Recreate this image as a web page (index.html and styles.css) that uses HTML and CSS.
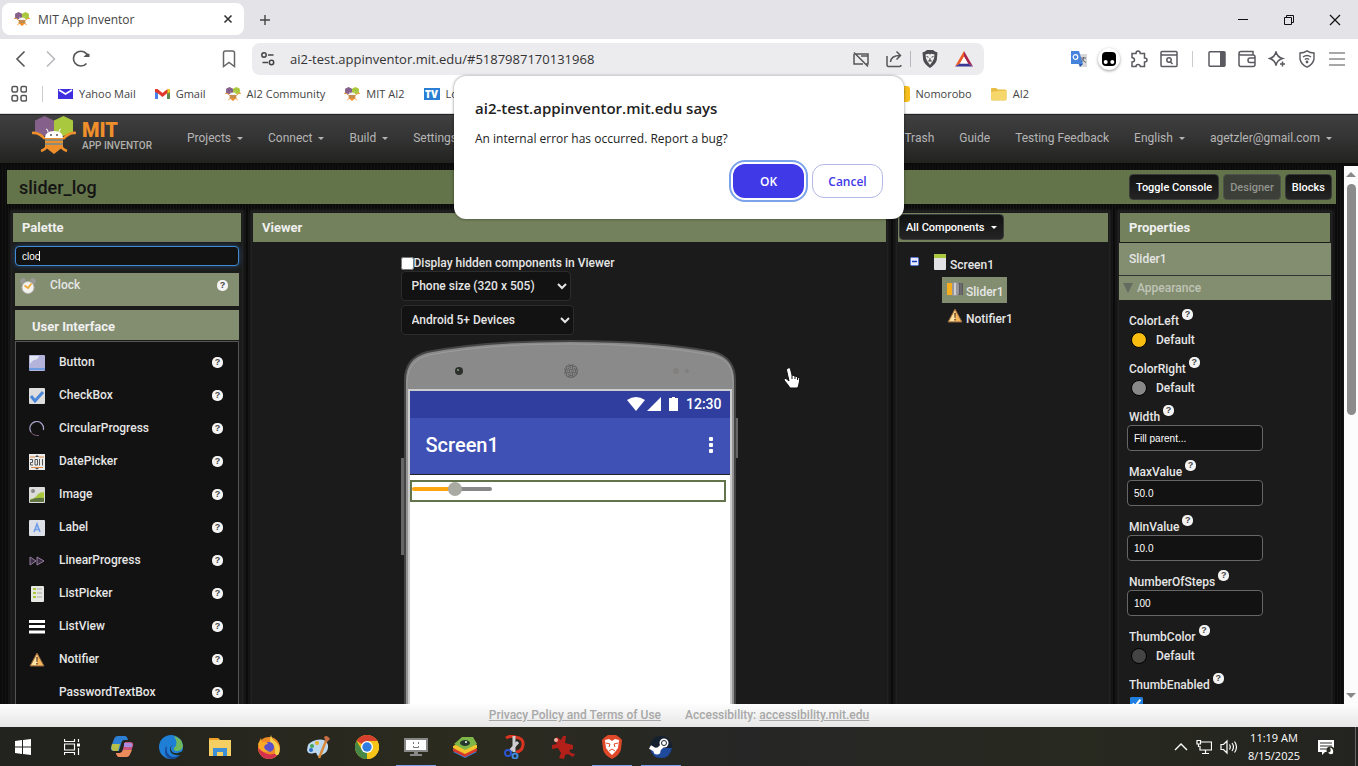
FILE: index.html
```html
<!DOCTYPE html>
<html lang="en">
<head>
    <meta charset="UTF-8">
    <meta name="viewport" content="width=device-width, initial-scale=1.0">
    <title>MIT App Inventor</title>
    <link rel="stylesheet" href="styles.css">
</head>
<body>
    <!-- shared icons -->
    <svg class="defs" width="0" height="0" aria-hidden="true">
        <symbol id="bee" viewBox="0 0 44 38">
            <path d="M3 4.500 12.500 0 22 4.500V16L12.500 20 3 16z" fill="#84608a"/>
            <path d="M22 4.500 31.500 0 41 4.500V16L31.500 20 22 16z" fill="#a9c83e"/>
            <path d="M0 17q7-1 13 6M44 17q-7-1-13 6M9 35q4-1 6-5M35 35q-4-1-6-5" fill="none" stroke="#ee8f2c" stroke-width="2.500"/>
            <path d="M16 16q0-3-2-3M27 16q0-3 2-3" fill="none" stroke="#fff" stroke-width="1"/>
            <path d="M13 22q0-7 9-7t9 7z" fill="#fff"/>
            <path d="M13 22h18v9l-9 7-9-7z" fill="#ee8f2c"/>
            <path d="M13 24h18M13 28h18" stroke="#8d8b7a" stroke-width="2"/>
            <circle cx="19" cy="19" r="1" fill="#555"/><circle cx="25" cy="19" r="1" fill="#555"/>
        </symbol>
        <symbol id="warn" viewBox="0 0 16 16">
            <path d="M8 1 15 14H1z" fill="#f6b65c" stroke="#8d6540" stroke-width="1"/>
            <path d="M8 3v10H2.500z" fill="#fde2a6"/>
            <path d="M7.200 5h1.600l-.3 5h-1zM7.200 11h1.600v1.500H7.200z" fill="#6b4a2c"/>
        </symbol>
    </svg>

    <!-- tab strip -->
    <div class="tabs">
        <div class="tab">
            <svg width="16" height="16"><use href="#bee"/></svg>
            <span>MIT App Inventor</span>
            <button class="icon-btn tab-close" aria-label="Close tab"><svg width="10" height="10" viewBox="0 0 10 10"><path d="M1.500 1.500l7 7M8.500 1.500l-7 7" stroke="#333" stroke-width="1.600"/></svg></button>
        </div>
        <button class="icon-btn new-tab" aria-label="New tab"><svg width="12" height="12" viewBox="0 0 12 12"><path d="M6 1v10M1 6h10" stroke="#444" stroke-width="1.400"/></svg></button>
        <div class="window-buttons">
            <button aria-label="Minimize"><svg width="12" height="12" viewBox="0 0 12 12"><path d="M1 5.500h10" stroke="#111"/></svg></button>
            <button aria-label="Restore"><svg width="12" height="12" viewBox="0 0 12 12" fill="none" stroke="#111"><path d="M1.500 3.500h7v7h-7zM3.500 3.500v-2h7v7h-2"/></svg></button>
            <button aria-label="Close"><svg width="12" height="12" viewBox="0 0 12 12"><path d="M1 1l10 10M11 1L1 11" stroke="#111" stroke-width="1.200"/></svg></button>
        </div>
    </div>

    <!-- address bar -->
    <div class="toolbar">
        <div class="nav-buttons">
            <button class="icon-btn" aria-label="Back"><svg width="18" height="18" viewBox="0 0 18 18" fill="none" stroke="#555" stroke-width="1.600"><path d="M12.500 1.500 5 9l7.500 7.500"/></svg></button>
            <button class="icon-btn" aria-label="Forward"><svg width="18" height="18" viewBox="0 0 18 18" fill="none" stroke="#b9b9bd" stroke-width="1.600"><path d="M5 1.500 12.500 9 5 16.500"/></svg></button>
            <button class="icon-btn" aria-label="Reload"><svg width="18" height="18" viewBox="0 0 18 18" fill="none" stroke="#555" stroke-width="1.600"><path d="M14.500 13.500A7.400 7.400 0 1 1 16 6.500"/><path d="M11.500 7h6V4q-2-1-3 0z" fill="#555" stroke="none"/></svg></button>
            <button class="icon-btn bookmark-btn" aria-label="Bookmark this page"><svg width="18" height="18" viewBox="0 0 18 18" fill="none" stroke="#666" stroke-width="1.500"><path d="M3.500 3q0-2 2-2h7q2 0 2 2v13.500L9 12.500l-5.500 4z"/></svg></button>
        </div>
        <div class="url-bar">
            <svg width="16" height="16" viewBox="0 0 16 16" fill="none" stroke="#444" stroke-width="1.500"><circle cx="4" cy="4" r="2.200"/><path d="M8 4h5.500"/><circle cx="11.500" cy="11.500" r="2.200"/><path d="M2.500 11.500H8"/></svg>
            <input type="text" aria-label="Address" value="ai2-test.appinventor.mit.edu/#5187987170131968">
            <svg width="18" height="18" viewBox="0 0 18 18" fill="none" stroke="#555" stroke-width="1.500"><path d="M4 4h12v10h-2M11 14H2V4M2 2.500 16 16.500M9 6h7"/></svg>
            <svg class="share" width="18" height="18" viewBox="0 0 18 18" fill="none" stroke="#555" stroke-width="1.500"><path d="M2 6v9q0 1.500 1.500 1.500h11q1.500 0 1.500-1.500M5.500 12Q6 5.500 15 5.500M11.500 1.500l4 4-4 4"/></svg>
            <span class="url-divider"></span>
            <svg width="18" height="18" viewBox="0 0 18 18"><path d="M4 1.500 6 0h6l2 1.500 2.500 1-.7 7.500q-1 4-6.800 8-5.800-4-6.800-8L1.500 2.500z" fill="#4b4b50"/><path d="M4.500 4.500l3-.8L9 4.500l1.500-.8 3 .8-.5 4-1.500 3L9 15l-2.500-3.500-1.500-3z" fill="#eee"/><path d="M5.500 6.500l2 .7M12.500 6.500l-2 .7M9 8v2l-1.500 1h3L9 10" stroke="#4b4b50" fill="none"/></svg>
            <svg class="bat" width="20" height="18" viewBox="0 0 20 18"><path d="M10 1 1 16.500l5-3L10 7z" fill="#ee5a26"/><path d="M10 1l9 15.500-5-3L10 7z" fill="#a8264c"/><path d="M1 16.500h18l-5-3H6z" fill="#3b3894"/><path d="M10 6.500l4 7H6z" fill="#fff"/></svg>
        </div>
        <div class="extensions">
            <button class="icon-btn" aria-label="Google Translate"><svg width="18" height="18" viewBox="0 0 18 18"><path d="M6 4h11v13H9z" fill="#d8d8d8"/><path d="M1 1h8l4 13H1z" fill="#4683dc"/><path d="M9 14h4l-3 3z" fill="#2a56b0"/><circle cx="5.500" cy="7" r="2.300" fill="none" stroke="#fff" stroke-width="1.200"/><path d="M11 8h5M13.500 7v1q0 3-2 4M12 9q1 2 4 3.500" stroke="#667" fill="none"/></svg></button>
            <button class="icon-btn" aria-label="Tampermonkey"><svg class="round" width="22" height="22" viewBox="0 0 22 22"><rect x="4" y="4" width="14" height="14" rx="4"/><circle cx="7.700" cy="14" r="2" fill="#fff"/><circle cx="14.300" cy="14" r="2" fill="#fff"/></svg></button>
            <button class="icon-btn" aria-label="Extensions"><svg width="18" height="18" viewBox="0 0 18 18" fill="none" stroke="#5a5a60" stroke-width="1.500"><path d="M2 3.500h4Q6 1 8 1t2.300 2.500h4.200V8Q17 8 17 10t-2.500 2v4.500h-4.200Q10 14.500 8 14.500T6 16.500H2V12q2.500 0 2.500-2T2 7.500z"/></svg></button>
            <button class="icon-btn" aria-label="Search page"><svg width="18" height="18" viewBox="0 0 18 18" fill="none" stroke="#5a5a60" stroke-width="1.500"><rect x="1" y="1.500" width="16" height="15" rx="1"/><path d="M1 5h16M10.500 12l2 2"/><circle cx="9" cy="10" r="2.200"/></svg></button>
            <span class="tool-divider"></span>
            <button class="icon-btn" aria-label="Sidebar"><svg width="18" height="18" viewBox="0 0 18 18"><rect x="1" y="1.800" width="16" height="14.500" rx="1" fill="none" stroke="#5a5a60" stroke-width="1.500"/><path d="M12 2h5v14h-5z" fill="#5a5a60"/></svg></button>
            <button class="icon-btn" aria-label="Wallet"><svg width="18" height="18" viewBox="0 0 18 18" fill="none" stroke="#5a5a60" stroke-width="1.500"><path d="M1 3.500Q1 1.500 3 1.500h12v3M1 3.500Q1 5 3 5h12q2 0 2 2v7.500q0 2-2 2H3q-2 0-2-2zM17 8h-5q-2 0-2 2.200T12 12.500h5"/></svg></button>
            <button class="icon-btn" aria-label="Leo AI"><svg width="18" height="18" viewBox="0 0 18 18" fill="none" stroke="#5a5a60" stroke-width="1.500"><path d="M8 1.500q1 5.500 6.500 7-5.500 1.500-6.500 7-1-5.500-6.500-7Q7 7 8 1.500zM14.500 11.500v5M12 14h5"/></svg></button>
            <button class="icon-btn" aria-label="VPN"><svg width="18" height="18" viewBox="0 0 18 18" fill="none" stroke="#5a5a60" stroke-width="1.400"><path d="M9 .8q3 2 7 2.200v6q-1 5.500-7 8.200Q3 14.500 2 9V3q4-.2 7-2.200zM5 7q4-3 8 0M6.800 9.500q2.200-1.700 4.400 0"/><circle cx="9" cy="12" r=".7"/></svg></button>
            <button class="icon-btn" aria-label="Menu"><svg width="18" height="18" viewBox="0 0 18 18" stroke="#8a8a8e" stroke-width="1.700"><path d="M1 3h16M1 9h16M1 15h16"/></svg></button>
        </div>
    </div>

    <!-- bookmarks -->
    <nav class="bookmarks">
        <button class="icon-btn apps" aria-label="Apps"><svg width="16" height="18" viewBox="0 0 16 18" fill="none" stroke="#555" stroke-width="1.500"><rect x="1" y="1.500" width="5.500" height="5.500" rx="1.500"/><rect x="10" y="1.500" width="5.500" height="5.500" rx="1.500"/><rect x="1" y="10.500" width="5.500" height="5.500" rx="1.500"/><rect x="10" y="10.500" width="5.500" height="5.500" rx="1.500"/></svg></button>
        <span class="tool-divider"></span>
        <a href="#"><svg width="15" height="12" viewBox="0 0 15 12"><path d="M0 1h15v10H0z" fill="#3f2ee0"/><path d="M1 2l6.500 4L14 2" stroke="#fff" stroke-width="1.500" fill="none"/></svg>Yahoo Mail</a>
        <a href="#"><svg width="15" height="12" viewBox="0 0 15 12"><path d="M0 2h3v9H0z" fill="#4a80e8"/><path d="M12 2h3v9h-3z" fill="#5b8a4a"/><path d="M0 1h2.500l5 4 5-4V5l-5 4-5-4L0 4z" fill="#e0392c"/><path d="M12.500 1H15v3l-2.500 2z" fill="#f3c21f"/></svg>Gmail</a>
        <a href="#"><svg width="16" height="16"><use href="#bee"/></svg>AI2 Community</a>
        <a href="#"><svg width="16" height="16"><use href="#bee"/></svg>MIT AI2</a>
        <a href="#" class="long"><span class="tv-badge">TV</span>Local</a>
        <a href="#"><span class="nomo-badge">?</span>Nomorobo</a>
        <a href="#"><svg width="16" height="14" viewBox="0 0 16 14"><path d="M0 2q0-1 1-1h4l2 1.500h7q1.500 0 1.500 1V12q0 1.500-1.500 1.500H1Q0 13.500 0 12z" fill="#e8bd45"/><path d="M0 5l7-1 8.500-.5V12q0 1-1.500 1H1q-1 0-1-1z" fill="#f5d76c"/></svg>AI2</a>
    </nav>

    <!-- App Inventor -->
    <header class="app-header">
        <svg class="logo" width="44" height="38"><use href="#bee"/></svg>
        <div class="brand"><strong>MIT</strong><span>APP INVENTOR</span></div>
        <nav class="menu">
            <a href="#" class="caret">Projects</a>
            <a href="#" class="caret">Connect</a>
            <a href="#" class="caret">Build</a>
            <a href="#" class="caret">Settings</a>
        </nav>
        <nav class="menu menu-right">
            <a href="#">Trash</a>
            <a href="#">Guide</a>
            <a href="#">Testing Feedback</a>
            <a href="#" class="caret">English</a>
            <a href="#" class="caret">agetzler@gmail.com</a>
        </nav>
    </header>

    <div class="app-scroll">
        <main class="app">
            <div class="project-bar">
                <h1>slider_log</h1>
                <button class="btn">Toggle Console</button>
                <button class="btn" disabled>Designer</button>
                <button class="btn">Blocks</button>
            </div>

            <div class="columns">
                <section class="panel palette">
                    <h2>Palette</h2>
                    <input class="search" type="text" aria-label="Search components" value="cloc">
                    <span class="text-caret"></span>
                    <div class="result">
                        <svg width="16" height="18" viewBox="0 0 16 18"><path d="M0 5q0-4 4-4l2 2-4 4zM16 5q0-4-4-4l-2 2 4 4z" fill="#9a9a98"/><circle cx="8" cy="10.500" r="6" fill="#f4f2ee" stroke="#b9b7b2"/><path d="M4.500 8.500 8 11l3.500-4.500" stroke="#efa93a" stroke-width="1.800" fill="none"/></svg>
                        <span>Clock</span>
                        <button class="help">?</button>
                    </div>
                    <h3>User Interface</h3>
                    <ul class="components">
                        <li><svg width="16" height="16" viewBox="0 0 16 16"><rect width="16" height="16" rx="1" fill="#b3b3dc"/><path d="M1 1h9q-1 4-5 4-2 1-4 4z" fill="#dfe6f4"/><path d="M0 13h16v2H0z" fill="#6d9ce0"/></svg><span>Button</span><button class="help">?</button></li>
                        <li><svg width="16" height="16" viewBox="0 0 16 16"><rect width="16" height="16" rx="1" fill="#dedede"/><path d="M2 8l4 5L14 4" stroke="#4a86d8" stroke-width="3" fill="none"/></svg><span>CheckBox</span><button class="help">?</button></li>
                        <li><svg width="16" height="16" viewBox="0 0 16 16" fill="none"><path d="M2 11A6.800 6.800 0 1 1 14.300 9" stroke="#a9a0c8" stroke-width="1.200"/><path d="M2 11q2 4 8 3.500" stroke="#7a5a78"/></svg><span>CircularProgress</span><button class="help">?</button></li>
                        <li><svg width="16" height="16" viewBox="0 0 16 16"><rect width="16" height="16" fill="#ececea"/><path d="M1 3h5M10 3h5M2 13.500h12" stroke="#e08a4a"/><path d="M6 3l2-2 2 2zM6 14l2 1.500 2-1.500z" fill="#444"/><path d="M1 5.500h2.500v3H1.500v2.500H4M6 5.500h2.500V11H6zM10.500 5v6.500M13.500 5v6.500" stroke="#555" fill="none"/></svg><span>DatePicker</span><button class="help">?</button></li>
                        <li><svg width="16" height="16" viewBox="0 0 16 16"><rect width="16" height="16" rx="1" fill="#dcdcda"/><circle cx="4" cy="4" r="2" fill="#888"/><path d="M1 12q5 0 8-5 2-2 6-2v10H1z" fill="#a9c83e"/><path d="M1 13q6-3 14-2v4H1z" fill="#5f7340"/></svg><span>Image</span><button class="help">?</button></li>
                        <li><svg width="16" height="16" viewBox="0 0 16 16"><rect width="16" height="16" rx="1" fill="#dde0e6"/><path d="M5 12l3-8 3 8M6 9.500h4" stroke="#6d9ce8" stroke-width="1.600" fill="none"/></svg><span>Label</span><button class="help">?</button></li>
                        <li><svg width="16" height="16" viewBox="0 0 16 16"><path d="M1 4l6 4-6 4zM8 4l7 4-7 4z" fill="#3a2f42" stroke="#9a7fa4"/></svg><span>LinearProgress</span><button class="help">?</button></li>
                        <li><svg width="16" height="16" viewBox="0 0 16 16"><rect x="2" width="13" height="16" rx="1" fill="#e6e6e2"/><path d="M4 3h3M4 7h3M4 11h3" stroke="#a9c83e" stroke-width="2"/><path d="M8 3h5M8 7h5M8 11h5" stroke="#aaa"/></svg><span>ListPicker</span><button class="help">?</button></li>
                        <li><svg width="16" height="16" viewBox="0 0 16 16"><path d="M0 2.500h16M0 7.500h16M0 13h16" stroke="#fff" stroke-width="3"/></svg><span>ListView</span><button class="help">?</button></li>
                        <li><svg width="16" height="16"><use href="#warn"/></svg><span>Notifier</span><button class="help">?</button></li>
                        <li><i class="no-icon"></i><span>PasswordTextBox</span><button class="help">?</button></li>
                    </ul>
                </section>

                <section class="panel viewer">
                    <h2>Viewer</h2>
                    <div class="viewer-body">
                        <label class="hidden-toggle"><input type="checkbox">Display hidden components in Viewer</label>
                        <select class="size-select" aria-label="Screen size"><option>Phone size (320 x 505)</option></select>
                        <select class="device-select" aria-label="Device theme"><option>Android 5+ Devices</option></select>
                        <div class="phone">
                            <svg class="phone-frame" width="338" height="420" viewBox="0 0 338 420">
                                <path d="M0 118h5v97H0zM333 78h4v40h-4z" fill="#666"/>
                                <path d="M4 420V40Q4 18 26 12 82 1 169 1t144 11q21 6 21 28v380z" fill="#8a8a8a" stroke="#444" stroke-width="2"/>
                                <path d="M6 420V40Q7 20 28 15 86 4 169 4t142 11q21 5 21 25v380" fill="none" stroke="#9c9c9c"/>
                                <circle cx="58" cy="31" r="4" fill="#2c2f2c"/><circle cx="57" cy="30" r="1" fill="#7fa07f"/>
                                <circle cx="170" cy="31" r="7" fill="#656565"/>
                                <path d="M164 28h12M163 31h14M164 34h12M167 25v12M170 24v14M173 25v12" stroke="#999" stroke-dasharray="1 1"/>
                                <circle cx="275" cy="31" r="3" fill="#827f7f"/><circle cx="286" cy="31" r="2" fill="#827f7f"/>
                            </svg>
                            <div class="screen">
                                <div class="status">
                                    <svg width="18" height="14" viewBox="0 0 18 14"><path d="M0 3q9-6 18 0L9 14z" fill="#fff"/></svg>
                                    <svg width="14" height="14" viewBox="0 0 14 14"><path d="M14 0v14H0z" fill="#fff"/></svg>
                                    <svg class="battery" width="9" height="14" viewBox="0 0 9 14"><path d="M0 1h3V0h3v1h3v13H0z" fill="#fff"/></svg>
                                    <span>12:30</span>
                                </div>
                                <div class="title-bar">
                                    <span>Screen1</span>
                                    <svg width="5" height="16" viewBox="0 0 5 16" fill="#fff"><rect width="4" height="4" rx="1"/><rect y="6" width="4" height="4" rx="1"/><rect y="12" width="4" height="4" rx="1"/></svg>
                                </div>
                                <div class="slider-box"><input type="range" aria-label="Slider1" min="10" max="50" value="32"></div>
                            </div>
                        </div>
                    </div>
                </section>

                <section class="panel tree">
                    <div class="panel-head"><button class="btn caret">All Components</button></div>
                    <ul>
                        <li class="root">
                            <svg class="minus" width="9" height="9" viewBox="0 0 9 9"><rect x=".5" y=".5" width="8" height="8" rx="1" fill="#e8ecff" stroke="#5a74d8"/><path d="M2 4.500h5" stroke="#1c38b0" stroke-width="1.500"/></svg>
                            <svg width="12" height="16" viewBox="0 0 12 16"><rect width="12" height="16" rx="1" fill="#e2e2e4"/><path d="M0 1q0-1 1-1h10q1 0 1 1v3H0z" fill="#a9c83e"/></svg>
                            <span>Screen1</span>
                        </li>
                        <li class="child selected">
                            <svg width="16" height="16" viewBox="0 0 16 16"><path d="M0 2h5v12H0z" fill="#f5ad1b"/><path d="M11 2h5v12h-5z" fill="#5c5c60"/><path d="M5 3q0-2 3-2t4 2v10q-1 2-4 2t-3-2z" fill="#98989c"/><path d="M7 2h2v12H7z" fill="#cfcfd2"/><path d="M14 2v12" stroke="#7a7a7c"/></svg>
                            <span>Slider1</span>
                        </li>
                        <li class="child">
                            <svg width="16" height="16"><use href="#warn"/></svg>
                            <span>Notifier1</span>
                        </li>
                    </ul>
                </section>

                <section class="panel properties">
                    <h2>Properties</h2>
                    <div class="target">Slider1</div>
                    <button class="group">Appearance</button>
                    <div class="props">
                        <div class="prop"><span class="name">ColorLeft<button class="help">?</button></span><button class="color"><i class="yellow"></i>Default</button></div>
                        <div class="prop"><span class="name">ColorRight<button class="help">?</button></span><button class="color"><i class="gray"></i>Default</button></div>
                        <div class="prop"><span class="name"><label for="width">Width</label><button class="help">?</button></span><input type="text" id="width" value="Fill parent..."></div>
                        <div class="prop"><span class="name"><label for="max">MaxValue</label><button class="help">?</button></span><input type="text" id="max" value="50.0"></div>
                        <div class="prop"><span class="name"><label for="min">MinValue</label><button class="help">?</button></span><input type="text" id="min" value="10.0"></div>
                        <div class="prop"><span class="name"><label for="steps">NumberOfSteps</label><button class="help">?</button></span><input type="text" id="steps" value="100"></div>
                        <div class="prop"><span class="name">ThumbColor<button class="help">?</button></span><button class="color"><i class="dark"></i>Default</button></div>
                        <div class="prop"><span class="name"><label for="thumb">ThumbEnabled</label><button class="help">?</button></span><input type="checkbox" id="thumb" checked></div>
                    </div>
                </section>
            </div>
        </main>
        <div class="scrollbar">
            <i class="arrow up"></i>
            <i class="thumb"></i>
            <i class="arrow down"></i>
        </div>
    </div>

    <footer class="app-footer">
        <a href="#">Privacy Policy and Terms of Use</a>
        <span>Accessibility: <a href="#">accessibility.mit.edu</a></span>
    </footer>

    <!-- Windows taskbar -->
    <div class="taskbar">
        <button class="start" aria-label="Start"><svg width="16" height="16" viewBox="0 0 16 16" fill="#fff"><path d="M0 2l7-1v6.500H0zM8 1l8-1v7.500H8zM0 8.500h7V15l-7-1zM8 8.500h8V16l-8-1z"/></svg></button>
        <button class="task-view" aria-label="Task View"><svg width="16" height="16" viewBox="0 0 16 16" fill="none" stroke="#fff" stroke-width="1.200"><path d="M.5 0v2.500h10V0M.5 5h10v6H.5zM.5 16v-2.500h10V16M14.500 0v3M14.500 9v7"/><path d="M13 4.500h3v3h-3z" fill="#fff" stroke="none"/></svg></button>
        <button aria-label="Copilot"><svg width="24" height="24" viewBox="0 0 24 24"><path d="M8 1h7q2 0 3 4h-4q-2 0-3 4l-2 7H4q-4 0-3-4L4 4q1-3 4-3z" fill="#2d7fd3"/><path d="M2 9h8l-2 7H4q-4 0-2-7z" fill="#b8bf48"/><path d="M16 22H9q-2 0-3-4h4q2 0 3-4l2-7h5q4 0 3 4l-3 8q-1 3-4 3z" fill="#c7567d"/><path d="M6 18h4q2 0 3-3h9l-2 4q-1 3-4 3H9q-2 0-3-4z" fill="#ec8c5a"/><path d="M14 8h6q3 0 2 4h-8z" fill="#a98ce0"/></svg></button>
        <button aria-label="Edge"><svg width="24" height="24" viewBox="0 0 24 24"><circle cx="12" cy="12" r="12" fill="#1f7fd6"/><path d="M15 1q8 2 9 10-1 5-6 5-4 0-3-3 5-4 0-12z" fill="#6fb85e"/><path d="M8 11q-2 9 6 11 5 0 7-3-2 5-9 5Q5 22 6 15q0-3 2-4z" fill="#184a9c"/><path d="M14 10q-3 2-2 5 2 4 7 3l5-2v3l-3 1q-9 1-10-5 0-4 3-5z" fill="#22281f"/></svg></button>
        <button aria-label="File Explorer"><svg width="22" height="20" viewBox="0 0 22 20"><path d="M0 1h9l2 2h11v16H0z" fill="#f6cf63"/><path d="M0 1h9l1 2H0z" fill="#ee9f25"/><path d="M4 11h14v8h-4v-4H8v4H4z" fill="#3f8fd6"/></svg></button>
        <button aria-label="Firefox"><svg width="24" height="24" viewBox="0 0 24 24"><circle cx="12" cy="13" r="11" fill="#f08a24"/><path d="M1 13q1 10 11 11 9-1 11-9-2 4-7 4-6 2-15-6z" fill="#d4314f"/><path d="M14 0q1 5 5 7 5 5 3 12-3 3-4-1 1-7-4-9-2-4 0-9z" fill="#f6d04b"/><circle cx="12" cy="12" r="5" fill="#5a50cc"/><path d="M1 9l3-6 1 4q5-1 6 2-3 0-4 3 1 4 6 4-9 4-12-7z" fill="#f9a928"/></svg></button>
        <button aria-label="Paint"><svg width="24" height="24" viewBox="0 0 24 24"><path d="M1 15Q1 7 10 5q10-2 12 5 1 7-6 10-4 2-5 0 0-3-3-2-6 2-7-3z" fill="#bcd9ef"/><circle cx="6" cy="11" r="2" fill="#48a65a"/><circle cx="11" cy="8" r="2" fill="#e6b229"/><circle cx="5" cy="15" r="2" fill="#2b6cc4"/><path d="M20 6 13 23" stroke="#d98a3a" stroke-width="2.500"/><path d="M18 2q3-3 6 2l-4 4z" fill="#c96d45"/></svg></button>
        <button aria-label="Chrome"><svg width="24" height="24" viewBox="0 0 24 24"><circle cx="12" cy="12" r="12" fill="#f6c318"/><path d="M12 12 1.600 6A12 12 0 0 1 22.400 6H12z" fill="#d8402e"/><path d="M12 12v12A12 12 0 0 1 1.600 6L7 15z" fill="#488846"/><path d="M12 24A12 12 0 0 0 22.400 6H12l5 9z" fill="#f6c318"/><circle cx="12" cy="12" r="6" fill="#fff"/><circle cx="12" cy="12" r="4.700" fill="#2f7de0"/></svg></button>
        <button class="open" aria-label="Screen recorder"><svg width="24" height="20" viewBox="0 0 24 20"><rect y="1" width="24" height="14" fill="#888"/><path d="M2 3h20v10H2z" fill="#fff"/><path d="M9.500 5v2M14.500 5v2M9.500 9v1.500h5V9" stroke="#777" fill="none"/><path d="M10 15h4v2h4v2H6v-2h4z" fill="#888"/></svg></button>
        <button aria-label="BlueStacks"><svg width="24" height="24" viewBox="0 0 24 24"><path d="M0 17l12-5 12 5-12 6z" fill="#2d7fd8"/><path d="M0 14l12-5 12 5v2l-12 6-12-6z" fill="#d8372d"/><path d="M0 11l12-5 12 4v3l-12 6-12-6z" fill="#f3c42b"/><path d="M1 9 9 2h11l4 7-12 6z" fill="#7fb648"/><ellipse cx="12" cy="8" rx="5" ry="3" fill="#23382f"/><circle cx="13" cy="7" r="1" fill="#fff"/></svg></button>
        <button aria-label="Snipping Tool"><svg width="22" height="24" viewBox="0 0 22 24"><path d="M3 3q5-3 9-1 9 1 8 8-1 7-7 7" fill="none" stroke="#d8341f" stroke-width="3"/><path d="M11 1v16M15 7 7 16" stroke="#cfcfd2" stroke-width="3"/><circle cx="5" cy="18" r="3" fill="none" stroke="#2b55d0" stroke-width="2"/><circle cx="12" cy="21" r="2.500" fill="none" stroke="#3d8ae0" stroke-width="2"/></svg></button>
        <button aria-label="Red critter"><svg width="24" height="24" viewBox="0 0 24 24"><path d="M1 10l5-1-3-4 3-3 4 3 2-4h3l-1 7 8 2v4l-4 1 2 3 4 1-2 3-5-3-3 1-1 4-5-1 2-5-3-5-6 1z" fill="#b31f19"/><circle cx="5" cy="5" r="2" fill="#eab0a0"/></svg></button>
        <button class="open" aria-label="Brave"><svg width="20" height="24" viewBox="0 0 20 24"><path d="M3 2l3-2h8l3 2 3 3-1 9q-1 6-9 10-8-4-9-10L0 5z" fill="#e0482a"/><path d="M3 5l4-1 3 2 3-2 4 1-1 8-3 4-3 3-3-3-3-4z" fill="#fff"/><path d="M4 8l4 1-1 3M16 8l-4 1 1 3M7 16l3-2 3 2" stroke="#e0482a" fill="none"/></svg></button>
        <button class="open" aria-label="Steam"><svg width="24" height="24" viewBox="0 0 24 24"><circle cx="12" cy="12" r="11" fill="#15202f"/><path d="M1 13h22q-2 10-11 10T1 13z" fill="#1f4a9c"/><path d="M1 12l7 4 6-6" stroke="#fff" stroke-width="4" fill="none"/><circle cx="15" cy="8" r="4.500" fill="#fff"/><circle cx="15" cy="8" r="2.500" fill="#fff" stroke="#15202f"/><circle cx="8" cy="16" r="3.500" fill="#fff"/></svg></button>
        <div class="tray">
            <svg width="14" height="14" viewBox="0 0 14 14" fill="none" stroke="#fff" stroke-width="1.400"><path d="M1 10l6-6 6 6"/></svg>
            <svg width="16" height="16" viewBox="0 0 16 16" fill="none" stroke="#fff" stroke-width="1.200"><path d="M5 3h10.500v8H4V7M9.500 11v3M6 14.500h7M1 1.500h3.500V5H1zM2.500 5v3"/></svg>
            <svg width="18" height="16" viewBox="0 0 18 16" fill="none" stroke="#fff" stroke-width="1.200"><path d="M1 5.500h2.500L7 2v12l-3.500-3.500H1zM9.500 5.500q1.500 2.500 0 5M12 4q3 4 0 8M14.500 2.500q4 5.500 0 11"/></svg>
            <div class="clock"><span>11:19 AM</span><span>8/15/2025</span></div>
            <svg width="18" height="18" viewBox="0 0 18 18"><path d="M1 2h16v12H8l-3 3v-3H1z" fill="#fff"/><path d="M3 5h12M3 8h12M3 11h7" stroke="#333"/><circle cx="13.500" cy="12.500" r="4" fill="#2a2b22"/><path d="M13 9.500q4 1 3 6-3 2-5-1 4 0 2-5z" fill="#fff"/></svg>
        </div>
    </div>

    <!-- confirm() popup -->
    <div class="dialog" role="alertdialog" aria-labelledby="dialog-title">
        <h2 id="dialog-title">ai2-test.appinventor.mit.edu says</h2>
        <p>An internal error has occurred. Report a bug?</p>
        <div class="dialog-buttons">
            <button class="ok">OK</button>
            <button class="cancel">Cancel</button>
        </div>
    </div>

    <svg class="pointer" width="18" height="24" viewBox="0 0 18 24"><path d="M5 2q2-1 2.500 1L9 9l6 2q2 1 1.500 4l-1 5-1 2H7l-2-3-4-5q0-2 2-1.500L6 15 3.500 4Q3.500 2.500 5 2z" fill="#fff" stroke="#111"/><path d="M9 9v4M12 10v3M14.500 11v3" stroke="#111"/></svg>
</body>
</html>
```

FILE: styles.css
```css
* {
    margin: 0;
    padding: 0;
    box-sizing: border-box;
}

body {
    display: flex;
    flex-direction: column;
    height: 100vh;
    overflow: hidden;
    position: relative;
    font-family: "Open Sans", "Noto Sans", sans-serif;
    font-size: 12px;
    color: #444;
    background: #fff;
}

button,
input,
select {
    font: inherit;
    color: inherit;
}

button {
    border: none;
    background: none;
}

a {
    color: inherit;
    text-decoration: none;
}

ul {
    list-style: none;
}

svg {
    display: block;
    flex: none;
}

.defs {
    position: absolute;
}

/* Browser tabs */
.tabs {
    display: flex;
    height: 39px;
    background: #e4e3e8;
    flex: none;
}

.tab {
    display: flex;
    align-items: center;
    gap: 8px;
    width: 242px;
    height: 32px;
    margin: 3px 0 0 2px;
    padding: 0 11px 0 12px;
    background: #fff;
    border-radius: 8px;
}

.tab-close {
    margin-left: auto;
}

.icon-btn {
    display: flex;
    align-items: center;
    justify-content: center;
}

.new-tab {
    width: 42px;
}

.window-buttons {
    display: flex;
    margin-left: auto;
}

.window-buttons button {
    display: flex;
    align-items: center;
    justify-content: center;
    width: 46px;
}

/* Toolbar */
.toolbar {
    display: flex;
    align-items: center;
    height: 40px;
    padding: 0 6px;
    flex: none;
}

.toolbar .icon-btn {
    width: 30px;
    height: 30px;
}

.nav-buttons {
    display: flex;
    width: 246px;
    padding-right: 8px;
}

.nav-buttons .bookmark-btn {
    margin-left: auto;
}

.url-bar {
    display: flex;
    align-items: center;
    flex: 1;
    height: 32px;
    padding: 0 10px 0 8px;
    background: #ececef;
    border-radius: 8px;
}

.url-bar input {
    flex: 1;
    min-width: 0;
    margin-left: 14px;
    border: none;
    outline: none;
    background: none;
    font-size: 13px;
    color: #333;
}

.share {
    margin-left: 15px;
}

.url-divider {
    width: 1px;
    height: 16px;
    margin: 0 10px 0 7px;
    background: #b8b8bc;
}

.bat {
    margin-left: 15px;
}

.extensions {
    display: flex;
    align-items: center;
    padding-left: 80px;
}

.round {
    border-radius: 50%;
    box-shadow: 0 1px 3px rgba(0, 0, 0, 0.4);
}

.tool-divider {
    width: 1px;
    height: 16px;
    margin: 0 9px 0 8px;
    background: #ccccd0;
}

/* Bookmarks */
.bookmarks {
    display: flex;
    align-items: center;
    gap: 19px;
    height: 35px;
    padding: 0 11px 5px;
    border-bottom: 1px solid #ddd;
    overflow: hidden;
    font-size: 11px;
    white-space: nowrap;
    flex: none;
}

.bookmarks a {
    display: flex;
    align-items: center;
    gap: 6px;
}

.bookmarks .tool-divider {
    margin: 0 -4px;
}

.bookmarks .long {
    width: 451px;
    overflow: hidden;
}

.tv-badge,
.nomo-badge {
    width: 16px;
    height: 12px;
    background: #2a7fd4;
    color: #fff;
    font-size: 10px;
    font-weight: 800;
    line-height: 12px;
    text-align: center;
}

.nomo-badge {
    height: 16px;
    border-radius: 3px;
    background: #f8bf1e;
    color: #222;
    line-height: 16px;
}

/* App header */
.app-header {
    display: flex;
    align-items: center;
    height: 49px;
    padding: 0 26px 2px 32px;
    background: linear-gradient(#403f41, #333 50%, #222220);
    border-top: 1px solid #222;
    font-family: Roboto, "Liberation Sans", sans-serif;
    font-size: 12px;
    color: #b5b5b5;
    flex: none;
}

.logo {
    margin-bottom: 6px;
}

.brand {
    display: flex;
    flex-direction: column;
    width: 110px;
    margin: 0 0 4px 6px;
    font-size: 10px;
    font-weight: 500;
    line-height: 12px;
    white-space: nowrap;
    color: #b0b0aa;
}

.brand strong {
    font-size: 20px;
    font-weight: 900;
    line-height: 20px;
    color: #ee8f2c;
}

.menu {
    display: flex;
    gap: 25px;
    margin-left: -5px;
}

.menu-right {
    margin-left: auto;
}

.caret::after {
    content: "";
    display: inline-block;
    margin-left: 6px;
    border: 3px solid transparent;
    border-top: 3px solid currentColor;
    border-bottom: 0;
    vertical-align: 2px;
}

/* Designer */
.app-scroll {
    display: flex;
    flex: 1;
    min-height: 0;
    padding-top: 3px;
    background: #0c0c0c;
}

.app {
    display: flex;
    flex-direction: column;
    flex: 1;
    min-width: 0;
    padding: 4px 8px 0 7px;
    overflow: hidden;
    background: repeating-linear-gradient(90deg, #0b0b0b 0 2px, #141414 2px 3px);
    font-family: Roboto, "Liberation Sans", sans-serif;
    font-size: 12px;
    font-weight: 500;
    color: #e6e6e6;
}

.project-bar {
    display: flex;
    align-items: center;
    gap: 4px;
    height: 34px;
    padding: 0 4px 0 12px;
    background: #63744a;
    flex: none;
}

.project-bar h1 {
    margin-right: auto;
    font-size: 18px;
    font-weight: 500;
    color: #141414;
}

.btn {
    height: 26px;
    padding: 0 6px;
    border: 1px solid #3a3a3a;
    border-radius: 4px;
    background: linear-gradient(#121212, #242424);
    font-size: 11px;
    font-weight: 500;
    color: #fff;
    white-space: nowrap;
}

.btn:disabled {
    background: #3c3e38;
    border-color: #50524c;
    color: #92948e;
}

.columns {
    display: flex;
    gap: 10px;
    flex: 1;
    min-height: 0;
    margin-top: 8px;
    padding: 0 5px;
}

.panel {
    width: 212px;
    background: #1b1b1b;
    box-shadow: 0 0 3px 2px #262626;
    flex: none;
}

.panel h2,
.panel-head {
    height: 30px;
    margin: 1px 1px 0;
    padding-left: 9px;
    background: #73825c;
    border-bottom: 1px solid #1b1b1b;
    font-size: 13px;
    font-weight: 700;
    line-height: 29px;
    color: #f0f0f0;
}

.palette {
    width: 230px;
    position: relative;
}

.search {
    display: block;
    width: 224px;
    height: 20px;
    margin: 3px 3px 7px;
    padding: 0 6px;
    border: 1px solid #3f8ad2;
    border-radius: 4px;
    outline: none;
    background: #121212;
    box-shadow: 0 0 5px #28507a;
    font-family: "Liberation Sans", sans-serif;
    font-size: 10px;
    font-weight: 400;
    color: #fff;
}

/* blinking text cursor, caught while on */
.text-caret {
    position: absolute;
    top: 39px;
    left: 27px;
    width: 1px;
    height: 10px;
    background: #fff;
}

.help {
    width: 11px;
    height: 11px;
    border-radius: 5px;
    background: #f4f4f4;
    font-family: "Liberation Sans", sans-serif;
    font-size: 9px;
    font-weight: 700;
    line-height: 11px;
    text-align: center;
    color: #444;
    flex: none;
}

.result {
    display: flex;
    align-items: center;
    gap: 14px;
    height: 33px;
    margin: 0 3px 4px;
    padding: 0 11px 8px 5px;
    background: #838e70;
}

.result span,
.components span {
    padding-bottom: 1px;
}

.result .help,
.components .help {
    margin-left: auto;
}

.palette h3 {
    height: 30px;
    margin: 0 3px 1px;
    padding-left: 17px;
    background: #838e70;
    font-size: 13px;
    font-weight: 700;
    line-height: 33px;
    color: #f0f0f0;
}

.components {
    margin: 0 3px;
    padding: 4px 15px 0 13px;
    background: #121212;
    border: 1px solid #555;
}

.components li {
    display: flex;
    align-items: center;
    gap: 14px;
    height: 33px;
}

.no-icon {
    width: 16px;
}

/* Viewer */
.viewer {
    flex: 1;
    min-width: 0;
}

.viewer-body {
    display: flex;
    flex-direction: column;
    align-items: flex-start;
    width: 338px;
    margin: 12px auto 0;
}

.hidden-toggle {
    display: flex;
    align-items: center;
    height: 16px;
    white-space: nowrap;
}

.hidden-toggle input {
    width: 13px;
    height: 13px;
}

.viewer select {
    height: 30px;
    margin-bottom: 4px;
    padding-left: 6px;
    border: 1px solid #2c2c2c;
    border-radius: 4px;
    background: #121212;
}

.size-select {
    width: 170px;
}

.device-select {
    width: 173px;
}

.phone {
    position: relative;
    width: 338px;
    height: 420px;
    margin-top: 1px;
    padding: 49px 7px 0;
}

.phone-frame {
    position: absolute;
    top: 0;
    left: 0;
}

.screen {
    position: relative;
    height: 400px;
    background: #fff;
    border: 2px solid #ccc;
}

.status {
    display: flex;
    align-items: center;
    justify-content: flex-end;
    gap: 2px;
    height: 27px;
    padding: 0 8px 2px 0;
    background: #303f9f;
    font-size: 14px;
    color: #fff;
}

.battery {
    margin: 0 6px;
}

.title-bar {
    display: flex;
    align-items: center;
    justify-content: space-between;
    height: 57px;
    padding: 0 16px 2px;
    background: #3f51b5;
    border-bottom: 1px solid #222;
    font-size: 20px;
    color: #fff;
}

.slider-box {
    width: 316px;
    height: 22px;
    margin-top: 5px;
    border: 2px solid #63744a;
}

.slider-box input {
    display: block;
    appearance: none;
    width: 80px;
    height: 4px;
    margin-top: 5px;
    border-radius: 2px;
    background: linear-gradient(90deg, #ffa510 50%, #888 50%);
}

.slider-box input::-webkit-slider-thumb {
    appearance: none;
    width: 14px;
    height: 14px;
    border-radius: 50%;
    background: #a9aba3;
}

/* Component tree */
.panel-head {
    padding: 1px 0 0 1px;
    line-height: 0;
}

.tree ul {
    padding-top: 7px;
}

.tree li {
    display: flex;
    align-items: center;
    gap: 4px;
    height: 26px;
    margin-bottom: 1px;
}

.tree li span {
    padding-top: 3px;
}

.tree .root {
    padding-left: 13px;
}

.tree .child {
    width: 65px;
    margin-left: 45px;
    padding-left: 5px;
    gap: 3px;
}

.tree .selected {
    background: #838e70;
}

.tree .minus {
    margin-right: 11px;
}

.tree li svg {
    margin-bottom: 3px;
}

/* Properties */
.target,
.group {
    display: block;
    width: 100%;
    height: 33px;
    padding-left: 10px;
    background: #838e70;
    border-bottom: 1px solid #333;
    line-height: 33px;
}

.group {
    height: 24px;
    padding-left: 4px;
    border: none;
    line-height: 24px;
    text-align: left;
    color: #bfc4b6;
}

.group::before {
    content: "";
    display: inline-block;
    margin-right: 4px;
    border: 5px solid transparent;
    border-top: 10px solid #666b62;
    border-bottom: 0;
    vertical-align: -1px;
}

.props {
    padding: 13px 8px 0;
}

.name {
    display: flex;
    align-items: center;
    gap: 3px;
    height: 16px;
    padding: 0 0 1px 2px;
}

.name .help {
    margin-bottom: 12px;
}

.color {
    display: flex;
    align-items: center;
    gap: 9px;
    height: 22px;
    margin: 0 0 10px 4px;
}

.color i {
    width: 16px;
    height: 16px;
    border: 1px solid #000;
    border-radius: 50%;
}

.yellow {
    background: #f9bd10;
}

.gray {
    background: #888;
}

.dark {
    background: #444;
}

.prop input[type="text"] {
    display: block;
    width: 136px;
    height: 26px;
    margin-bottom: 13px;
    padding: 0 6px;
    border: 1px solid #666;
    border-radius: 4px;
    background: #121212;
    font-family: "Liberation Sans", sans-serif;
    font-size: 10px;
    font-weight: 400;
    color: #fff;
}

.prop input[type="checkbox"] {
    width: 13px;
    height: 13px;
    margin: 4px 3px;
    accent-color: #1f7fe0;
}

/* Page scrollbar */
.scrollbar {
    display: flex;
    flex-direction: column;
    align-items: center;
    width: 14px;
    padding: 6px 0;
    background: #fcfcfc;
}

.arrow {
    border: 5px solid transparent;
}

.up {
    border-top: 0;
    border-bottom-color: #888;
}

.down {
    margin-top: auto;
    border-bottom: 0;
    border-top-color: #888;
}

.thumb {
    width: 9px;
    height: 44%;
    margin-top: 7px;
    border-radius: 5px;
    background: #8b8b8b;
}

/* Footer */
.app-footer {
    display: flex;
    justify-content: center;
    gap: 24px;
    height: 23px;
    background: linear-gradient(#fdfdfd, #e6e6e6);
    font-family: Roboto, "Liberation Sans", sans-serif;
    font-size: 12px;
    font-weight: 500;
    line-height: 22px;
    color: #a8a8a8;
    flex: none;
}

.app-footer a {
    text-decoration: underline;
}

/* Taskbar */
.taskbar {
    display: flex;
    height: 39px;
    background: linear-gradient(90deg, #22221e, #2b2b1f 35%, #262626 55%, #28291f 80%, #232320);
    color: #fff;
    flex: none;
}

.taskbar button {
    display: flex;
    align-items: center;
    justify-content: center;
    width: 49px;
    position: relative;
}

.taskbar .start {
    width: 46px;
}

.taskbar .task-view {
    width: 51px;
}

.taskbar .open::after {
    content: "";
    position: absolute;
    bottom: 0;
    width: 40px;
    height: 1px;
    background: #7b9fe8;
}

.tray {
    display: flex;
    align-items: center;
    gap: 8px;
    margin: 0 2px 0 auto;
    padding-right: 20px;
    border-right: 1px solid #666;
}

.clock {
    display: flex;
    flex-direction: column;
    width: 56px;
    margin-right: 7px;
    font-size: 11px;
    line-height: 18px;
    text-align: center;
}

/* JS confirm dialog */
.dialog {
    position: absolute;
    top: 76px;
    left: 50%;
    width: 450px;
    margin-left: -225px;
    padding: 21px 21px;
    border-radius: 12px;
    background: #fff;
    box-shadow: 0 0 3px rgba(0, 0, 0, 0.5);
    color: #222;
}

.dialog h2 {
    font-size: 15px;
    font-weight: 600;
    line-height: 22px;
}

.dialog p {
    margin: 10px 0 16px;
    font-size: 12px;
    line-height: 19px;
}

.dialog-buttons {
    display: flex;
    justify-content: flex-end;
    gap: 8px;
}

.dialog-buttons button {
    width: 71px;
    height: 34px;
    border-radius: 12px;
    font-weight: 600;
}

.dialog-buttons .ok {
    background: #3f39e8;
    color: #fff;
    outline: 2px solid #7ba2ea;
    outline-offset: 2px;
}

.dialog-buttons .cancel {
    border: 1px solid #b4b8e4;
    color: #3f39e8;
}

.pointer {
    position: absolute;
    top: 366px;
    left: 783px;
}
```
